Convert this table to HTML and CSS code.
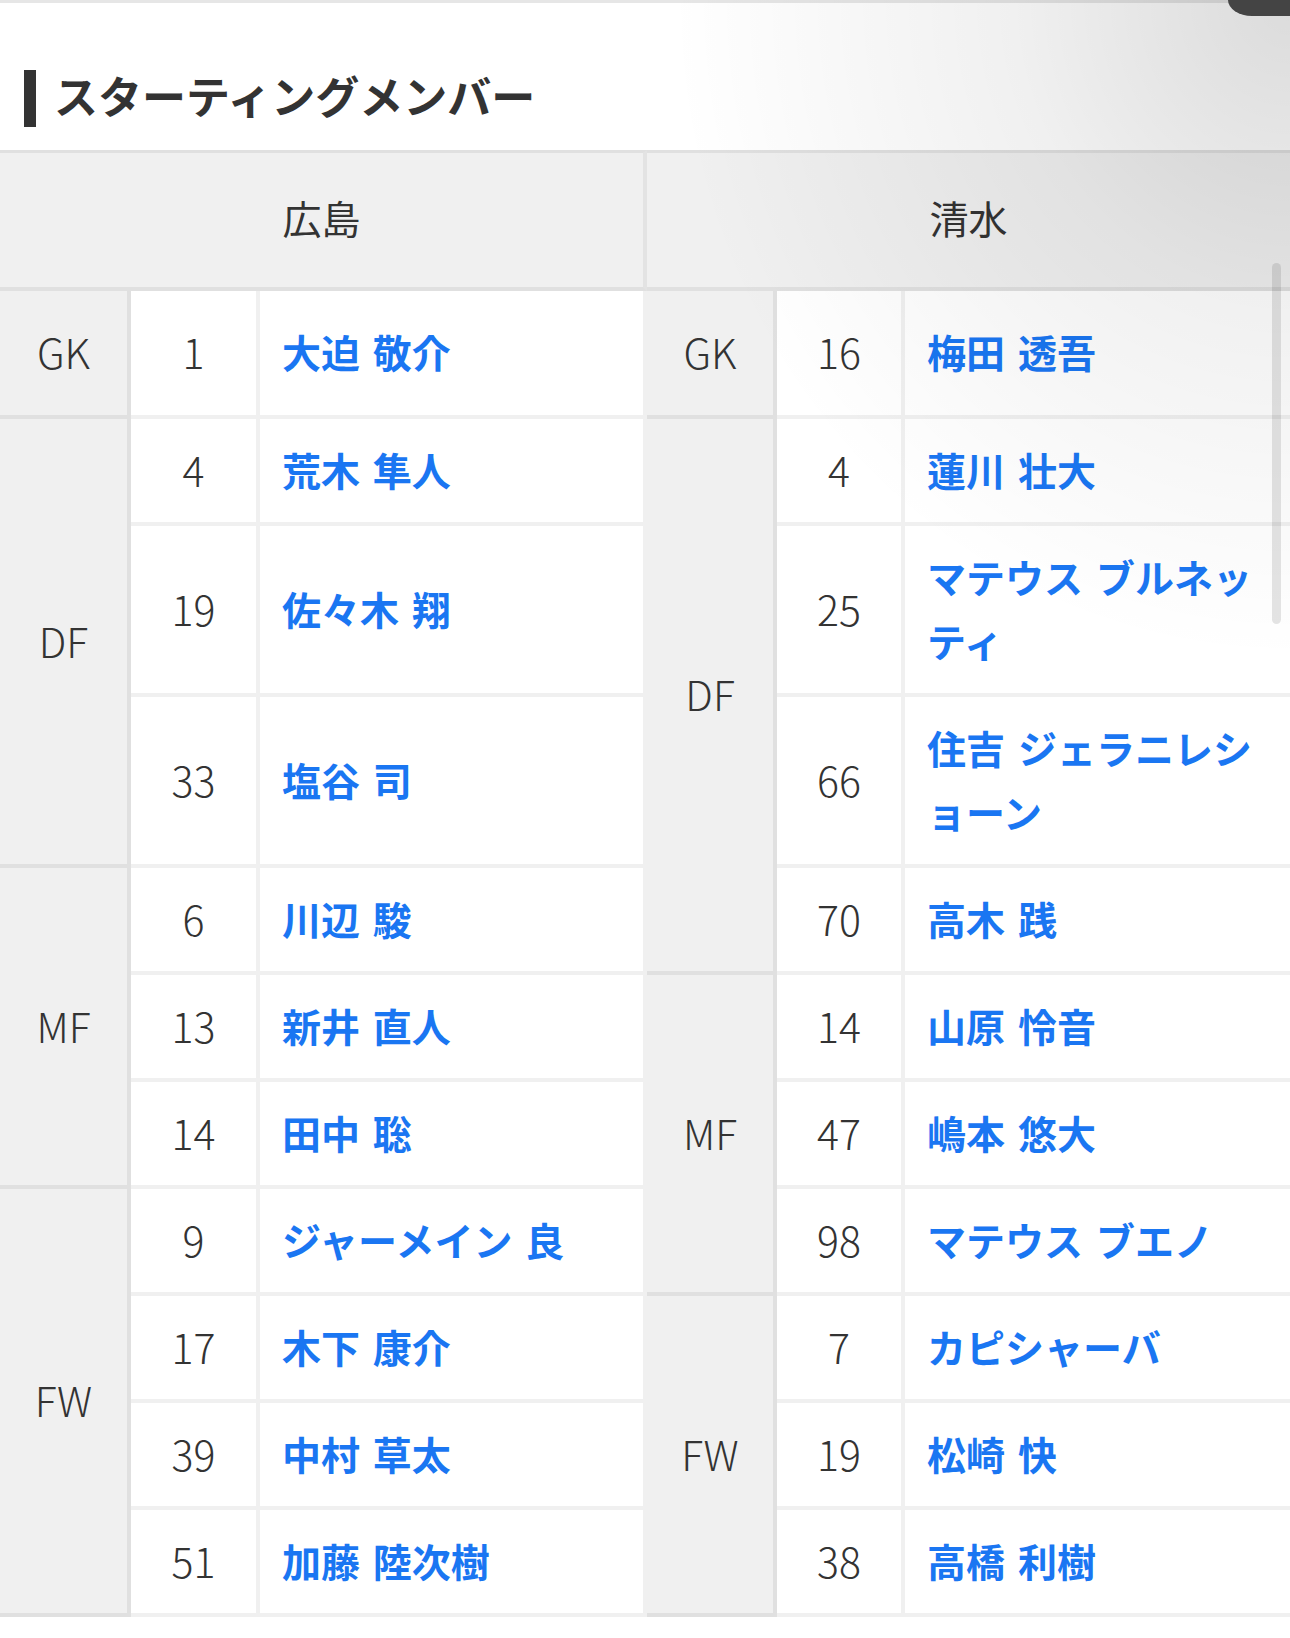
FILE: index.html
```html
<!DOCTYPE html>
<html lang="ja">
<head>
<meta charset="utf-8">
<title>スターティングメンバー</title>
<link rel="stylesheet" href="styles.css">
</head>
<body>
<section class="section-head">
  <h2 class="title">スターティングメンバー</h2>
</section>
<table class="lineup">
  <colgroup>
    <col class="c-pos-l"><col class="c-num-l"><col class="c-name-l">
    <col class="c-pos-r"><col class="c-num-r"><col class="c-name-r">
  </colgroup>
  <thead>
    <tr>
      <th colspan="3" class="team team-l">広島</th>
      <th colspan="3" class="team">清水</th>
    </tr>
  </thead>
  <tbody>
    <tr class="gk">
      <th class="pos">GK</th><td class="num">1</td><td class="name name-l">大迫 敬介</td>
      <th class="pos">GK</th><td class="num">16</td><td class="name">梅田 透吾</td>
    </tr>
    <tr>
      <th class="pos" rowspan="3">DF</th><td class="num">4</td><td class="name name-l">荒木 隼人</td>
      <th class="pos" rowspan="4">DF</th><td class="num">4</td><td class="name">蓮川 壮大</td>
    </tr>
    <tr>
      <td class="num">19</td><td class="name name-l">佐々木 翔</td>
      <td class="num">25</td><td class="name">マテウス ブルネッ<br>ティ</td>
    </tr>
    <tr>
      <td class="num">33</td><td class="name name-l">塩谷 司</td>
      <td class="num">66</td><td class="name">住吉 ジェラニレシ<br>ョーン</td>
    </tr>
    <tr>
      <th class="pos" rowspan="3">MF</th><td class="num">6</td><td class="name name-l">川辺 駿</td>
      <td class="num">70</td><td class="name">高木 践</td>
    </tr>
    <tr>
      <td class="num">13</td><td class="name name-l">新井 直人</td>
      <th class="pos" rowspan="3">MF</th><td class="num">14</td><td class="name">山原 怜音</td>
    </tr>
    <tr>
      <td class="num">14</td><td class="name name-l">田中 聡</td>
      <td class="num">47</td><td class="name">嶋本 悠大</td>
    </tr>
    <tr>
      <th class="pos" rowspan="4">FW</th><td class="num">9</td><td class="name name-l">ジャーメイン 良</td>
      <td class="num">98</td><td class="name">マテウス ブエノ</td>
    </tr>
    <tr>
      <td class="num">17</td><td class="name name-l">木下 康介</td>
      <th class="pos" rowspan="3">FW</th><td class="num">7</td><td class="name">カピシャーバ</td>
    </tr>
    <tr>
      <td class="num">39</td><td class="name name-l">中村 草太</td>
      <td class="num">19</td><td class="name">松崎 快</td>
    </tr>
    <tr>
      <td class="num">51</td><td class="name name-l">加藤 陸次樹</td>
      <td class="num">38</td><td class="name">高橋 利樹</td>
    </tr>
  </tbody>
</table>
<div class="shade"></div>
<div class="corner-tab"></div>
<div class="scrollbar"></div>
</body>
</html>
```
FILE: styles.css
```css
* {
  box-sizing: border-box;
}

html,
body {
  margin: 0;
  padding: 0;
  background: #fff;
}

body {
  position: relative;
  width: 1290px;
  min-height: 1638px;
  overflow: hidden;
  font-family: "Noto Sans CJK JP", "Noto Sans", sans-serif;
  color: #333;
}

.section-head {
  height: 150px;
  border-top: 3px solid #e6e6e6;
  padding: 64px 0 26px 24px;
}

.title {
  display: flex;
  align-items: center;
  gap: 18px;
  margin: 0;
  height: 57px;
  font-size: 44px;
  line-height: 57px;
  font-weight: 700;
  color: #333;
}

.title::before {
  content: "";
  width: 12px;
  height: 57px;
  margin-top: 5px;
  background: #333;
  flex: none;
}

.lineup {
  width: 1290px;
  table-layout: fixed;
  border-collapse: separate;
  border-spacing: 0;
  font-size: 39px;
  line-height: 64px;
}

.c-pos-l { width: 131px; }
.c-num-l { width: 129px; }
.c-name-l { width: 387px; }
.c-pos-r { width: 130px; }
.c-num-r { width: 128px; }
.c-name-r { width: 385px; }

.team {
  background: #f0f0f0;
  border-top: 3px solid #e0e0e0;
  border-bottom: 4px solid #e0e0e0;
  padding: 32px 0 38px;
  font-weight: 400;
  text-align: center;
  color: #333;
}

.team-l {
  border-right: 4px solid #e3e3e3;
}

.pos,
.num,
.name {
  padding: 17.75px 0 21.25px;
  vertical-align: middle;
}

.gk > .pos,
.gk > .num,
.gk > .name {
  padding-top: 28px;
  padding-bottom: 32px;
}

.pos {
  background: #f0f0f0;
  border-right: 4px solid #e0e0e0;
  border-bottom: 4px solid #e0e0e0;
  font-size: 41px;
  font-weight: 300;
  text-align: center;
  color: #333;
}

.num {
  background: #fff;
  border-right: 4px solid #f0f0f0;
  border-bottom: 4px solid #f0f0f0;
  font-size: 41px;
  font-weight: 300;
  text-align: center;
  color: #333;
}

.name {
  background: #fff;
  border-bottom: 4px solid #f0f0f0;
  padding-left: 22px;
  padding-right: 22px;
  text-align: left;
  font-weight: 700;
  color: #1a76f2;
  white-space: nowrap;
  word-spacing: 4px;
}

.name-l {
  border-right: 4px solid #f0f0f0;
}

.shade {
  position: absolute;
  top: 0;
  right: 0;
  width: 760px;
  height: 820px;
  pointer-events: none;
  background: radial-gradient(ellipse 620px 660px at 100% 0%, rgba(0, 0, 0, 0.14) 0%, rgba(0, 0, 0, 0.06) 45%, rgba(0, 0, 0, 0) 100%);
}

.corner-tab {
  position: absolute;
  top: 0;
  right: 0;
  width: 62px;
  height: 16px;
  background: #444;
  border-bottom-left-radius: 24px 16px;
}

.scrollbar {
  position: absolute;
  top: 263px;
  right: 9px;
  width: 9px;
  height: 361px;
  border-radius: 5px;
  background: rgba(0, 0, 0, 0.1);
}
```
